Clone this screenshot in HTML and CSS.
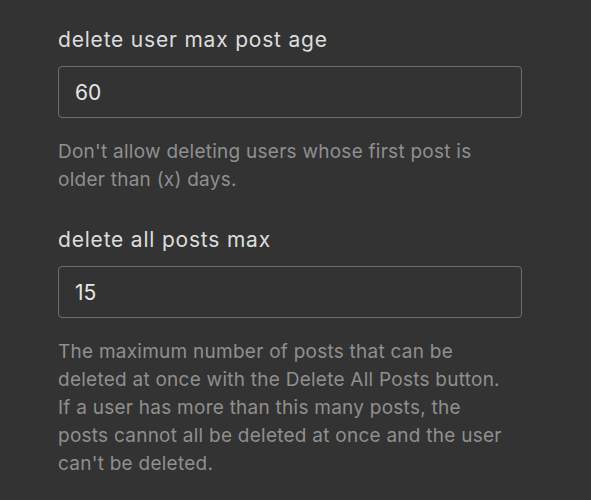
FILE: index.html
```html
<!DOCTYPE html>
<html lang="en">
<head>
    <meta charset="UTF-8">
    <meta name="viewport" content="width=device-width, initial-scale=1.0">
    <title>Settings</title>
    <link rel="stylesheet" href="styles.css">
</head>
<body>
    <div class="settings">
        <div class="setting">
            <label class="setting-label" for="max-post-age">delete user max post age</label>
            <input class="setting-input" type="text" id="max-post-age" value="60">
            <p class="setting-desc">Don't allow deleting users whose first post is older than (x) days.</p>
        </div>
        <div class="setting">
            <label class="setting-label" for="all-posts-max">delete all posts max</label>
            <input class="setting-input" type="text" id="all-posts-max" value="15">
            <p class="setting-desc">The maximum number of posts that can be deleted at once with the Delete All Posts button. If a user has more than this many posts, the posts cannot all be deleted at once and the user can't be deleted.</p>
        </div>
    </div>
</body>
</html>
```

FILE: styles.css
```css
body {
    margin: 0;
    background-color: #333333;
    font-family: Inter, "Noto Sans", sans-serif;
}
.settings {
    padding: 26px 0 0 58px;
    width: 464px;
}
.setting {
    margin-bottom: 32px;
}
.setting-label {
    display: block;
    color: #dddddd;
    font-size: 21px;
    letter-spacing: 0.8px;
    line-height: 28px;
    margin-bottom: 12px;
}
.setting-input {
    display: block;
    box-sizing: border-box;
    width: 464px;
    height: 52px;
    padding: 0 16px;
    background-color: #333333;
    border: 1px solid #6e6e6e;
    border-radius: 4px;
    color: #e6e6e6;
    font-family: inherit;
    font-size: 21px;
    outline: none;
}
.setting-desc {
    max-width: 456px;
    margin: 20px 0 0;
    color: #8f8f8f;
    font-size: 19px;
    letter-spacing: 0.25px;
    line-height: 28px;
}
```
